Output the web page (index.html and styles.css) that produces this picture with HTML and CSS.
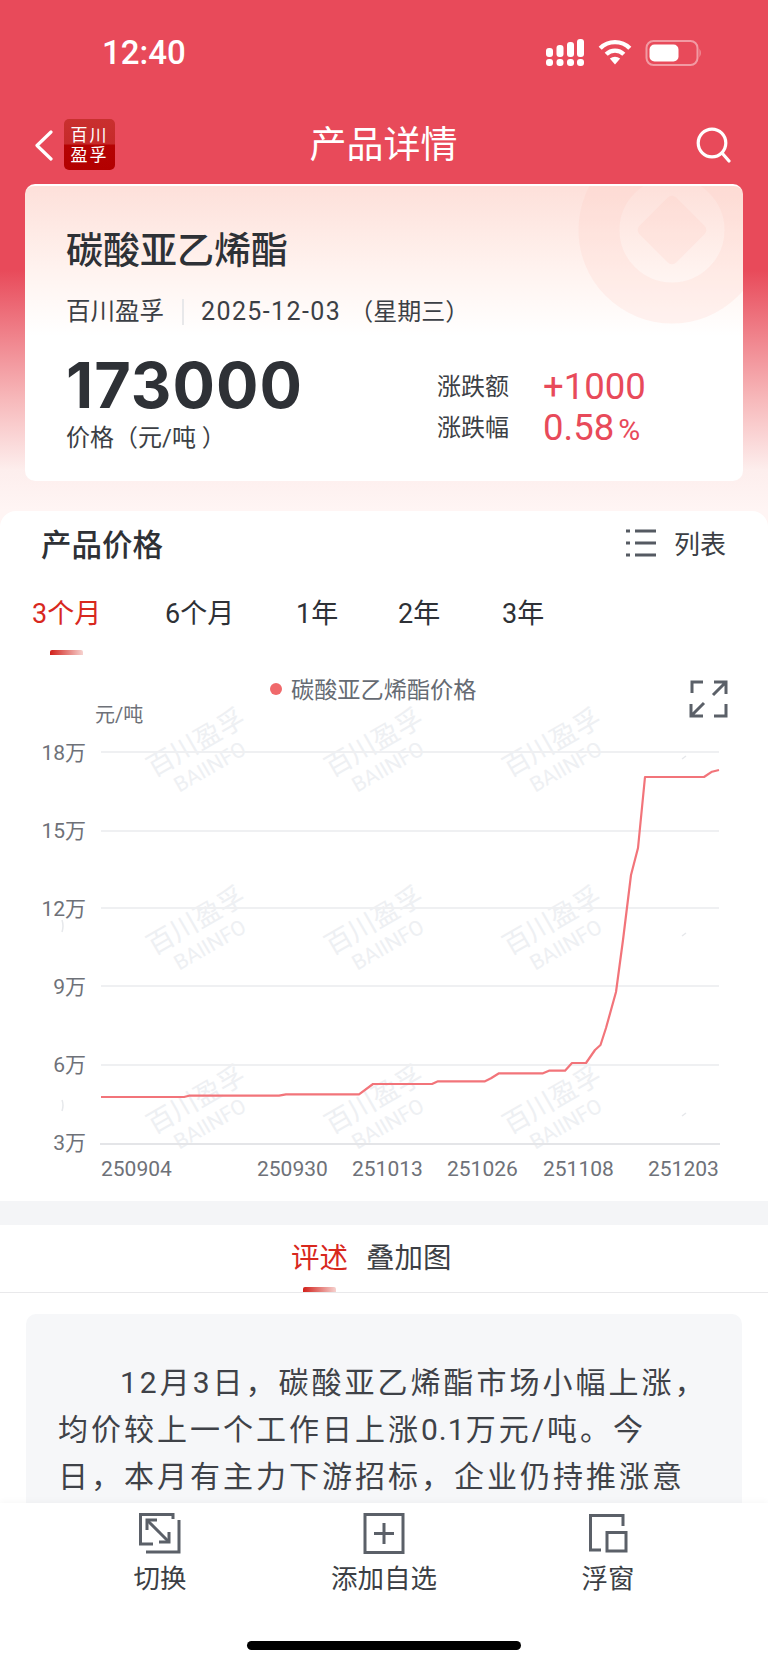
FILE: index.html
```html
<!DOCTYPE html>
<html lang="zh-CN">
<head>
    <meta charset="UTF-8">
    <meta name="viewport" content="width=device-width, initial-scale=1.0">
    <title>产品详情</title>
    <link rel="stylesheet" href="styles.css">
</head>
<body>
    <div class="phone">
        <div class="status">
            <span class="time">12:40</span>
            <svg class="status-icons" width="156" height="30" viewBox="546 36 156 30">
                <g fill="#fff">
                    <rect x="546" y="47" width="7" height="9" rx="3"/>
                    <rect x="556.5" y="44" width="7" height="12" rx="3"/>
                    <rect x="567" y="41" width="7" height="15" rx="3"/>
                    <rect x="577" y="38" width="7" height="18" rx="3"/>
                    <rect x="546" y="58" width="7" height="7" rx="3"/>
                    <rect x="556.5" y="58" width="7" height="7" rx="3"/>
                    <rect x="567" y="58" width="7" height="7" rx="3"/>
                    <rect x="577" y="58" width="7" height="7" rx="3"/>
                    <path d="M615 63.5 L609.8 57.6 Q615 54 620.2 57.6 Z"/>
                </g>
                <g fill="none" stroke="#fff" stroke-width="4.4">
                    <path d="M600.2 47.2 A21 21 0 0 1 629.8 47.2"/>
                    <path d="M606.2 53.2 A12.5 12.5 0 0 1 623.8 53.2"/>
                </g>
                <rect x="646.5" y="40" width="51" height="24" rx="7" fill="none" stroke="#f29aa3" stroke-width="2"/>
                <rect x="649.5" y="43.5" width="29" height="17" rx="5" fill="#fff"/>
                <path d="M699.5 47.5 Q702 52 699.5 56.5 Z" fill="#f29aa3"/>
            </svg>
        </div>

        <div class="nav">
            <svg class="back" width="18" height="31" viewBox="0 0 18 31">
                <path d="M16 2 L2 15.5 L16 29" fill="none" stroke="#fff" stroke-width="3.2" stroke-linecap="round" stroke-linejoin="round"/>
            </svg>
            <div class="logo"><span>百川</span><span>盈孚</span></div>
            <h1 class="nav-title">产品详情</h1>
            <svg class="search" width="36" height="36" viewBox="0 0 36 36">
                <circle cx="16" cy="16" r="13.8" fill="none" stroke="#fff" stroke-width="3.2"/>
                <path d="M26 26 L33 34" fill="none" stroke="#fff" stroke-width="3.2" stroke-linecap="round"/>
            </svg>
        </div>

        <div class="card">
            <svg class="card-deco" width="240" height="180" viewBox="0 0 240 180">
                <circle cx="120" cy="44" r="73" fill="none" stroke="#ffc9bf" stroke-opacity="0.2" stroke-width="41"/>
                <rect x="94" y="18" width="52" height="52" rx="6" fill="#ffc9bf" fill-opacity="0.2" transform="rotate(45 120 44)"/>
            </svg>
            <h2 class="product">碳酸亚乙烯酯</h2>
            <div class="meta">
                <span>百川盈孚</span>
                <span class="meta-line"></span>
                <span class="meta-date">2025-12-03</span>
                <span class="meta-week">（星期三）</span>
            </div>
            <div class="price-row">
                <div class="price-box">
                    <div class="price">173000</div>
                    <div class="price-unit">价格（元/吨 ）</div>
                </div>
                <div class="change">
                    <div class="change-row"><span class="change-label">涨跌额</span><span class="change-val">+1000</span></div>
                    <div class="change-row"><span class="change-label">涨跌幅</span><span class="change-val">0.58<small>%</small></span></div>
                </div>
            </div>
        </div>

        <div class="panel">
            <div class="panel-head">
                <h3>产品价格</h3>
                <div class="list-btn">
                    <svg width="30" height="28" viewBox="0 0 30 28">
                        <g stroke="#555a62" stroke-width="3" fill="none">
                            <path d="M0 2 H4 M9 2 H30"/>
                            <path d="M0 14 H4 M9 14 H30"/>
                            <path d="M0 26 H4 M9 26 H30"/>
                        </g>
                    </svg>
                    <span>列表</span>
                </div>
            </div>
            <div class="ranges">
                <div class="range active">3个月</div>
                <div class="range">6个月</div>
                <div class="range">1年</div>
                <div class="range">2年</div>
                <div class="range">3年</div>
            </div>

            <svg class="chart" width="768" height="531" viewBox="0 670 768 531">
                <defs>
                    <g id="wm">
                        <text class="mark-cn" transform="translate(-3 -8) rotate(-30)" y="9">百川盈孚</text>
                        <text class="mark-en" transform="translate(11 16) rotate(-30)" y="7">BAIINFO</text>
                    </g>
                </defs>
                <use href="#wm" x="199" y="751"/>
                <use href="#wm" x="377" y="751"/>
                <use href="#wm" x="555" y="751"/>
                <use href="#wm" x="199" y="929"/>
                <use href="#wm" x="377" y="929"/>
                <use href="#wm" x="555" y="929"/>
                <use href="#wm" x="199" y="1108"/>
                <use href="#wm" x="377" y="1108"/>
                <use href="#wm" x="555" y="1108"/>
                <g stroke="#e6e8eb" stroke-width="1.5" fill="none">
                    <path d="M62 920 Q64 926 62 932 M62 1100 Q64 1105 62 1111 M682 759 L686 756 M682 936 L686 933 M682 1116 L686 1113"/>
                </g>

                <circle cx="276" cy="689" r="6" fill="#f0696b"/>
                <text class="legend" x="291" y="698">碳酸亚乙烯酯价格</text>
                <g fill="none" stroke="#5b6068" stroke-width="3">
                    <path d="M692 693 V682 H703"/>
                    <path d="M714 682 H726 V694 M726 682 L713 695"/>
                    <path d="M691 704 V716 H703 M691 716 L704 703"/>
                    <path d="M726 704 V716 H714"/>
                </g>

                <text class="unit" x="95" y="722">元/吨</text>

                <g stroke="#eff0f2" stroke-width="2">
                    <path d="M101 752 H719"/>
                    <path d="M101 831 H719"/>
                    <path d="M101 908 H719"/>
                    <path d="M101 986 H719"/>
                    <path d="M101 1065 H719"/>
                </g>
                <path d="M100 1144 H720" stroke="#e4e5e8" stroke-width="2"/>

                <g class="axis-y">
                    <text x="86" y="760">18万</text>
                    <text x="86" y="838">15万</text>
                    <text x="86" y="916">12万</text>
                    <text x="86" y="994">9万</text>
                    <text x="86" y="1072">6万</text>
                    <text x="86" y="1150">3万</text>
                </g>
                <g class="axis-x">
                    <text x="101" y="1176">250904</text>
                    <text x="257" y="1176">250930</text>
                    <text x="352" y="1176">251013</text>
                    <text x="447" y="1176">251026</text>
                    <text x="543" y="1176">251108</text>
                    <text x="648" y="1176">251203</text>
                </g>

                <polyline fill="none" stroke="#f2747a" stroke-width="2.2" stroke-linejoin="round"
                    points="101,1097 184,1097 189,1095.7 279,1095.7 286,1094.3 359,1094.3 373,1084 432,1084 438,1081.3 485,1081.3 491,1078.3 499,1073.3 543,1073.3 549,1070.7 565,1070.7 572,1063 586,1063 595,1050 600.5,1045 606,1028 616,992 623,940 631,875 638,848 645,777 704,777 712,771.7 719,770"/>
            </svg>

            <div class="band"></div>

            <div class="tabs">
                <div class="tab active">评述</div>
                <div class="tab">叠加图</div>
            </div>

            <div class="comment-wrap">
                <div class="comment">
                    <p>12月3日，碳酸亚乙烯酯市场小幅上涨，<br>均价较上一个工作日上涨<span class="num">0.1</span>万元/吨。今<br>日，本月有主力下游招标，企业仍持推涨意</p>
                </div>
            </div>
        </div>

        <div class="bottom">
            <div class="actions">
                <div class="action">
                    <svg width="42" height="41" viewBox="0 0 42 41">
                        <g fill="none" stroke="#5b6068" stroke-width="3">
                            <path d="M34 6 V1.5 H1.5 V31 H14"/>
                            <path d="M40 7 V39 H7"/>
                            <path d="M8 7 L30 29"/>
                            <path d="M8 17 V7 H18"/>
                            <path d="M30 19 V29 H20"/>
                        </g>
                    </svg>
                    <span>切换</span>
                </div>
                <div class="action">
                    <svg width="42" height="41" viewBox="0 0 42 41">
                        <g fill="none" stroke="#5b6068" stroke-width="3">
                            <rect x="2" y="1.5" width="38" height="38"/>
                            <path d="M21 10 V31 M11 20.5 H31"/>
                        </g>
                    </svg>
                    <span>添加自选</span>
                </div>
                <div class="action">
                    <svg width="42" height="41" viewBox="0 0 42 41">
                        <g fill="none" stroke="#5b6068" stroke-width="3">
                            <path d="M36 13 V2.5 H3.5 V37 H14"/>
                            <rect x="20" y="19.5" width="19" height="18.5"/>
                        </g>
                    </svg>
                    <span>浮窗</span>
                </div>
            </div>
            <div class="home"></div>
        </div>
    </div>
</body>
</html>
```

FILE: styles.css
```css
* {
    box-sizing: border-box;
}
body {
    margin: 0;
    font-family: Roboto, "Noto Sans CJK SC", sans-serif;
    color: #2e3136;
}
h1, h2, h3, p {
    margin: 0;
    font-weight: 400;
}
.phone {
    width: 768px;
    height: 1665px;
    display: flex;
    flex-direction: column;
    overflow: hidden;
    background: linear-gradient(180deg, #e84a5a 0, #e84a5a 270px, #f7b9bb 400px, #fdeeed 470px, #fff5f4 510px);
}

/* status bar */
.status {
    height: 100px;
    flex-shrink: 0;
    display: flex;
    justify-content: space-between;
    align-items: center;
    padding: 4px 66px 0 102px;
}
.time {
    color: white;
    font-size: 33px;
    font-weight: 500;
}

/* nav */
.nav {
    height: 84px;
    flex-shrink: 0;
    display: flex;
    align-items: flex-start;
    padding: 19px 36px 0 35px;
    position: relative;
}
.back {
    margin-top: 11px;
}
.logo {
    width: 51px;
    height: 51px;
    margin-left: 11px;
    border-radius: 5px;
    background: linear-gradient(180deg, #c9302f 0, #c62a2a 48%, #b50303 52%, #b30000 100%);
    color: #fff;
    font-size: 17px;
    line-height: 20px;
    letter-spacing: 2px;
    display: flex;
    flex-direction: column;
    justify-content: center;
    align-items: center;
}
.nav-title {
    flex: 1;
    margin: 5px 44px 0 0;
    text-align: center;
    color: white;
    font-size: 37px;
    line-height: 44px;
}
.search {
    margin-top: 8px;
}

/* product card */
.card {
    flex-shrink: 0;
    height: 297px;
    margin: 0 25px;
    padding: 40px 41px 0;
    border-radius: 10px;
    border-top: 2px solid rgba(255, 255, 255, 0.7);
    background: linear-gradient(180deg, #fde0da 0, #fff2ee 80px, #fff 150px);
    position: relative;
    overflow: hidden;
}
.card-deco {
    position: absolute;
    top: 0;
    right: -49px;
}
.product {
    position: relative;
    font-size: 37px;
    line-height: 52px;
    font-weight: 500;
    color: #2e3136;
}
.meta {
    display: flex;
    align-items: center;
    margin-top: 17px;
    font-size: 24.5px;
    line-height: 34px;
    color: #3c3f45;
    position: relative;
}
.meta-line {
    width: 2px;
    height: 26px;
    margin: 0 17px 0 18px;
    background: #e8e8ea;
}
.meta-date {
    font-size: 25px;
    letter-spacing: 1.4px;
}
.meta-week {
    margin-left: 8px;
    font-size: 24px;
}
.price-row {
    display: flex;
    margin-top: 21px;
}
.price-box {
    width: 371px;
}
.price {
    font-family: Inter, Roboto, sans-serif;
    font-size: 63px;
    line-height: 71px;
    font-weight: 700;
    letter-spacing: 1px;
    color: #2e3136;
}
.price-unit {
    font-size: 24px;
    line-height: 34px;
    color: #3c3f45;
}
.change {
    padding-top: 16px;
}
.change-row {
    display: flex;
    align-items: center;
    height: 41px;
}
.change-label {
    width: 106px;
    margin-bottom: 4px;
    font-size: 24px;
    color: #3c3f45;
}
.change-val {
    font-size: 36.5px;
    color: #e84a5a;
}
.change-val small {
    margin-left: 4px;
    font-size: 30px;
}

/* panel */
.panel {
    flex: 1;
    min-height: 0;
    margin-top: 30px;
    display: flex;
    flex-direction: column;
    background: white;
    border-radius: 16px 16px 0 0;
}
.panel-head {
    height: 63px;
    flex-shrink: 0;
    display: flex;
    justify-content: space-between;
    align-items: center;
    padding: 0 42px 0 41px;
}
.panel-head h3 {
    font-size: 30.5px;
    font-weight: 500;
    color: #2e3136;
}
.list-btn {
    display: flex;
    align-items: center;
    gap: 18px;
    font-size: 26px;
    color: #3c3f45;
}
.ranges {
    flex-shrink: 0;
    display: grid;
    grid-template-columns: 133px 131px 102px 104px auto;
    padding: 22px 0 0 32px;
    height: 96px;
}
.range {
    justify-self: start;
    white-space: nowrap;
    font-size: 27px;
    line-height: 36px;
    color: #2e3136;
}
.range.active {
    color: #d8281e;
}
.range.active::after, .tab.active::after {
    content: "";
    display: block;
    width: 33px;
    height: 5px;
    margin: 18px auto 0;
    border-radius: 2px 2px 0 0;
    background: linear-gradient(90deg, #d2201a, #f6d2cf);
}
.chart {
    display: block;
    flex-shrink: 0;
}
.mark-cn {
    font-size: 27px;
    fill: #eef0f3;
    text-anchor: middle;
}
.mark-en {
    font-size: 21px;
    fill: #eef0f3;
    text-anchor: middle;
}
.legend {
    font-size: 23.2px;
    fill: #666b73;
}
.unit {
    font-size: 20px;
    fill: #6e7178;
}
.axis-y text {
    font-size: 21px;
    fill: #6e7178;
    text-anchor: end;
}
.axis-x text {
    font-size: 21px;
    fill: #6e7178;
}
.band {
    height: 24px;
    flex-shrink: 0;
    background: #f4f5f7;
}
.tabs {
    flex-shrink: 0;
    height: 68px;
    display: flex;
    gap: 18px;
    padding: 14px 0 0 291px;
    border-bottom: 1px solid #e9e9eb;
}
.tab {
    font-size: 28.5px;
    line-height: 40px;
    color: #3c3f45;
}
.tab.active {
    color: #d8281e;
}
.tab.active::after {
    margin-top: 8px;
}
.comment-wrap {
    flex: 1;
    min-height: 0;
    overflow: hidden;
    padding: 21px 26px 0;
}
.comment {
    height: 300px;
    padding: 45px 32px 0;
    border-radius: 10px;
    background: #f6f7f9;
}
.comment p {
    font-size: 30px;
    line-height: 47px;
    letter-spacing: 3px;
    text-indent: 62px;
    color: #3f4248;
}
.num {
    letter-spacing: 1px;
}

/* bottom bar */
.bottom {
    flex-shrink: 0;
    height: 162px;
    background: white;
    padding-top: 10px;
    box-shadow: 0 -2px 6px rgba(0, 0, 0, 0.03);
    position: relative;
}
.actions {
    display: flex;
    justify-content: center;
}
.action {
    width: 224px;
    display: flex;
    flex-direction: column;
    align-items: center;
    gap: 7px;
    font-size: 26.5px;
    line-height: 36px;
    color: #3c3f45;
}
.action svg {
    display: block;
}
.home {
    width: 274px;
    height: 9px;
    margin: 44px auto 0;
    border-radius: 5px;
    background: black;
}
```
